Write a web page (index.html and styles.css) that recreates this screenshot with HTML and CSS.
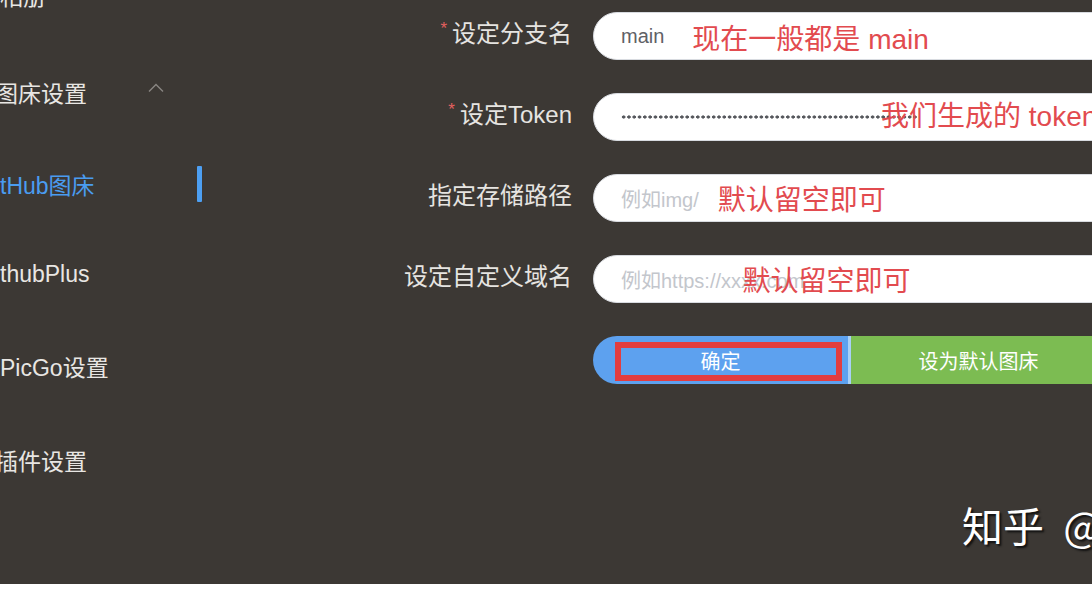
FILE: index.html
```html
<!DOCTYPE html>
<html lang="zh-CN">
<head>
<meta charset="utf-8">
<title>PicGo GitHub图床设置</title>
<link rel="stylesheet" href="styles.css">
</head>
<body>
<div class="page">
  <aside class="sidebar">
    <div class="nav-item nav-first"><span class="cut-top">相册</span></div>
    <div class="nav-item nav-group">
      <span class="shift-s">图床设置</span>
      <svg class="chev" width="16" height="10" viewBox="0 0 16 10"><polyline points="1,8.5 8,1.5 15,8.5" fill="none" stroke="#8a8683" stroke-width="1.4"/></svg>
    </div>
    <div class="nav-item nav-active">
      <span class="shift-l">GitHub图床</span>
      <span class="bar"></span>
    </div>
    <div class="nav-item"><span class="shift-l">GithubPlus</span></div>
    <div class="nav-item"><span>PicGo设置</span></div>
    <div class="nav-item nav-last"><span class="shift-s">插件设置</span></div>
  </aside>

  <main class="main">
    <div class="form">
      <div class="label"><span class="req">*</span>设定分支名</div>
      <div class="field">
        <span class="value">main</span>
        <span class="note note-1">现在一般都是 main</span>
      </div>

      <div class="label"><span class="req">*</span>设定Token</div>
      <div class="field">
        <span class="dots"></span>
        <span class="note note-2">我们生成的 token</span>
      </div>

      <div class="label">指定存储路径</div>
      <div class="field">
        <span class="ph">例如img/</span>
        <span class="note note-3">默认留空即可</span>
      </div>

      <div class="label">设定自定义域名</div>
      <div class="field">
        <span class="ph">例如https://xxxx.com</span>
        <span class="note note-4">默认留空即可</span>
      </div>

      <div class="label"></div>
      <div class="btn-group">
        <div class="btn btn-blue">确定<span class="mark"></span></div>
        <div class="sep"></div>
        <div class="btn btn-green">设为默认图床</div>
      </div>
    </div>
  </main>

  <div class="watermark">知乎 @</div>
</div>
<div class="strip"></div>
</body>
</html>
```

FILE: styles.css
```css
html, body {
  margin: 0;
  padding: 0;
  background: #ffffff;
  overflow: hidden;
}

body {
  width: 1092px;
  height: 604px;
  font-family: "Liberation Sans", "Noto Sans CJK SC", sans-serif;
}

.page {
  position: relative;
  height: 584px;
  background: #3c3834;
  display: flex;
  overflow: hidden;
}

.strip {
  height: 20px;
  background: #ffffff;
}

/* ---------- sidebar ---------- */
.sidebar {
  width: 202px;
  flex: none;
  display: flex;
  flex-direction: column;
}

.nav-item {
  height: 92px;
  box-sizing: border-box;
  flex: none;
  display: flex;
  align-items: center;
  font-size: 23px;
  color: #e8e6e3;
  white-space: nowrap;
}

.nav-first {
  height: 98px;
  margin-top: -54px;
}

.shift-s { margin-left: -5px; }
.shift-l { margin-left: -23px; }

.nav-group {
  justify-content: space-between;
  padding-right: 38px;
  padding-top: 4px;
}

.chev {
  margin-top: -8px;
}

.nav-active {
  justify-content: space-between;
  color: #4a9cf0;
  padding-top: 4px;
}

.nav-last {
  padding-top: 4px;
}

.bar {
  width: 5px;
  height: 36px;
  background: #4d9ff2;
  border-radius: 1px;
}

/* ---------- form ---------- */
.main {
  flex: 1;
  min-width: 0;
  padding-top: 12px;
}

.form {
  display: grid;
  grid-template-columns: 370px 560px;
  column-gap: 21px;
  row-gap: 33px;
}

.label {
  height: 48px;
  box-sizing: border-box;
  padding-bottom: 10px;
  display: flex;
  justify-content: flex-end;
  align-items: center;
  font-size: 24px;
  color: #e6e4e1;
  white-space: nowrap;
}

.req {
  align-self: flex-start;
  margin-top: 9px;
  margin-right: 5px;
  font-size: 17px;
  line-height: 16px;
  color: #e4605f;
}

.field {
  height: 48px;
  box-sizing: border-box;
  background: #ffffff;
  border: 1px solid #d8dbe0;
  border-radius: 24px;
  display: flex;
  align-items: center;
  padding-left: 27px;
  white-space: nowrap;
  overflow: hidden;
}

.value {
  font-size: 20px;
  color: #5f6166;
}

.ph {
  font-size: 20px;
  color: #c3c6cc;
}

.dots {
  width: 296px;
  height: 4px;
  flex: none;
  background-image: radial-gradient(circle, #55575c 1.4px, transparent 1.8px);
  background-size: 5.3px 4px;
  background-repeat: repeat-x;
}

.note {
  font-size: 28px;
  color: #e24b4f;
  flex: none;
}

.note-1 { margin-left: 28px; margin-top: 2px; }
.note-2 { margin-left: -36px; margin-top: -6px; }
.note-3 { margin-left: 19px; }
.note-4 { margin-left: -62px; }

.btn-group {
  height: 48px;
  display: flex;
}

.btn {
  height: 48px;
  width: 255px;
  flex: none;
  display: flex;
  justify-content: center;
  align-items: center;
  font-size: 20px;
  color: #ffffff;
}

.btn-blue {
  position: relative;
  background: #5da1ef;
  border-radius: 24px 0 0 24px;
}

.sep {
  width: 3px;
  flex: none;
  background: #a9d0f6;
}

.btn-green {
  background: #7cbc52;
}

.mark {
  position: absolute;
  left: 22px;
  top: 6px;
  width: 227px;
  height: 39px;
  box-sizing: border-box;
  border: 6px solid #e33d3f;
}

.watermark {
  position: absolute;
  left: 962px;
  top: 494px;
  font-size: 41px;
  word-spacing: 10px;
  color: #ffffff;
  font-family: "Noto Sans CJK SC", sans-serif;
  text-shadow: 2px 2px 2px #111;
  white-space: nowrap;
}
```
